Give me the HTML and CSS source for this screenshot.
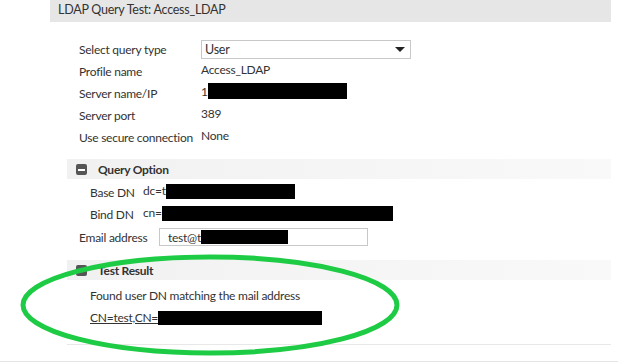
FILE: index.html
```html
<!DOCTYPE html>
<html lang="en">
<head>
    <meta charset="UTF-8">
    <title>LDAP Query Test</title>
    <link rel="stylesheet" href="styles.css">
</head>
<body>
    <div class="dialog">
        <div class="dialog-title">LDAP Query Test: Access_LDAP</div>

        <div class="form">
            <div class="row">
                <span class="label">Select query type</span>
                <div class="select">
                    <span>User</span>
                    <span class="caret"></span>
                </div>
            </div>
            <div class="row">
                <span class="label">Profile name</span>
                <span class="value">Access_LDAP</span>
            </div>
            <div class="row">
                <span class="label">Server name/IP</span>
                <span class="value">1<span class="redact" style="width:139px"></span></span>
            </div>
            <div class="row">
                <span class="label">Server port</span>
                <span class="value">389</span>
            </div>
            <div class="row">
                <span class="label">Use secure connection</span>
                <span class="value">None</span>
            </div>
        </div>

        <div class="section query-option">
            <div class="section-head"><span class="toggle"></span>Query Option</div>
            <div class="section-body">
                <div class="dn-row">
                    <span class="dn-label">Base DN</span>
                    <span class="dn-value">dc=t<span class="redact" style="width:129px"></span></span>
                </div>
                <div class="dn-row">
                    <span class="dn-label">Bind DN</span>
                    <span class="dn-value">cn=<span class="redact" style="width:231px"></span></span>
                </div>
                <div class="email-row">
                    <span class="email-label">Email address</span>
                    <div class="input">test@t<span class="redact" style="width:87px"></span></div>
                </div>
            </div>
        </div>

        <div class="section">
            <div class="section-head"><span class="toggle"></span>Test Result</div>
            <div class="result">
                <div>Found user DN matching the mail address</div>
                <div class="result-dn"><u>CN=test,CN=</u><span class="redact" style="width:164px"></span></div>
            </div>
        </div>
    </div>

    <svg class="highlight" width="618" height="363" viewBox="0 0 618 363">
        <ellipse cx="210" cy="305" rx="187" ry="48" fill="none" stroke="#1ecb44" stroke-width="5"/>
    </svg>
</body>
</html>
```

FILE: styles.css
```css
body {
    margin: 0;
    font-family: Lato, "Open Sans", sans-serif;
    font-size: 12px;
    letter-spacing: -0.25px;
    color: #333;
    background: #fff;
    position: relative;
    height: 363px;
    overflow: hidden;
}
.dialog {
    width: 618px;
    height: 361px;
    border-bottom: 1px solid #e4e4e4;
}
.dialog-title {
    margin-left: 50px;
    width: 553px;
    height: 22px;
    line-height: 20px;
    padding-left: 8px;
    font-size: 12.5px;
    background-color: #e6e6e6;
}
.form {
    padding: 16px 0 0 79px;
}
.row {
    display: flex;
    align-items: center;
    height: 22px;
}
.label {
    flex: none;
    width: 122px;
    white-space: nowrap;
}
.value {
    display: flex;
    align-items: center;
    margin-top: -4px;
}
.redact {
    display: inline-block;
    height: 16px;
    background-color: #000;
}
.select {
    display: flex;
    align-items: center;
    justify-content: space-between;
    width: 200px;
    height: 17px;
    padding: 0 5px 0 3px;
    border: 1px solid #c8c8c8;
    font-size: 12.5px;
}
.caret {
    width: 0;
    height: 0;
    border-left: 5px solid transparent;
    border-right: 5px solid transparent;
    border-top: 5px solid #222;
}
.section {
    margin-left: 67px;
    width: 544px;
}
.query-option {
    margin-top: 11px;
}
.section-head {
    display: flex;
    align-items: center;
    height: 20px;
    font-weight: bold;
    background: linear-gradient(to right, #f1f1f1, #f9f9f9);
}
.toggle {
    position: relative;
    width: 11px;
    height: 11px;
    margin: 0 11px 0 9px;
    border-radius: 2px;
    background-color: #555;
}
.toggle::after {
    content: "";
    position: absolute;
    left: 2px;
    top: 5px;
    width: 7px;
    height: 2px;
    background-color: #fff;
}
.section-body {
    padding: 2px 0 11px;
}
.dn-row {
    display: flex;
    align-items: center;
    height: 22px;
    padding-left: 23px;
}
.dn-label {
    width: 53px;
}
.dn-value {
    display: flex;
    align-items: center;
    margin-top: -3px;
}
.dn-value .redact {
    height: 15px;
    margin-top: 1px;
}
.email-row {
    display: flex;
    align-items: center;
    height: 24px;
    padding-left: 12px;
}
.email-label {
    width: 80px;
}
.input {
    display: flex;
    align-items: center;
    width: 199px;
    height: 16px;
    padding-left: 8px;
    border: 1px solid #c8c8c8;
}
.input .redact {
    height: 14px;
}
.result {
    padding: 5px 0 0 23px;
    height: 59px;
    line-height: 22px;
    border-bottom: 1px solid #e8e8e8;
}
.result-dn {
    display: flex;
    align-items: center;
}
.result-dn .redact {
    height: 14px;
}
.highlight {
    position: absolute;
    left: 0;
    top: 0;
}
```
